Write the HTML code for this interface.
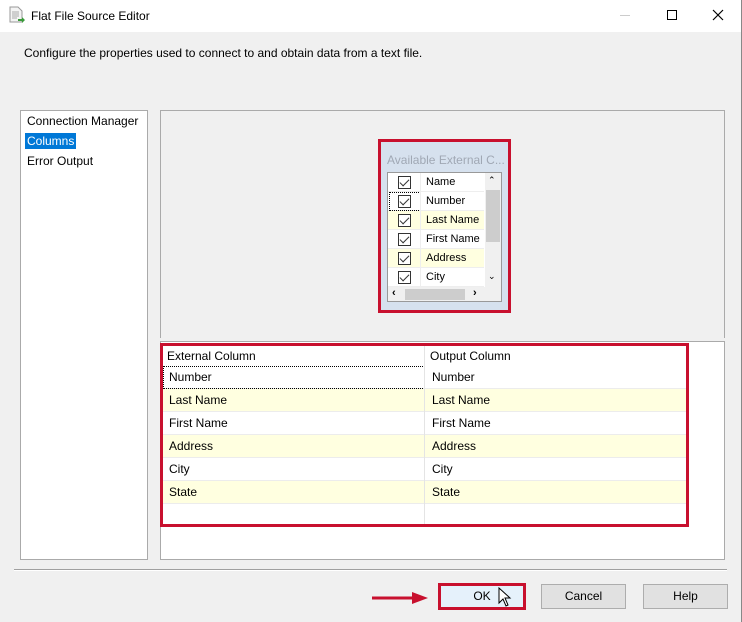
<!DOCTYPE html>
<html><head><style>
*{margin:0;padding:0;box-sizing:border-box}
body{width:742px;height:622px;background:#f0f0f0;font-family:"Liberation Sans",sans-serif;font-size:12px;color:#000;position:relative;overflow:hidden}
.a{position:absolute}
.row{position:absolute;left:0;width:523px;height:23px;border-bottom:1px solid #ececec}
.row span{position:absolute;top:4px}
.y{background:#ffffe0}
.btn{position:absolute;background:#e1e1e1;border:1px solid #adadad;text-align:center;line-height:23px;font-size:12px}
.cb{position:absolute;left:10px;width:13px;height:13px;border:1px solid #333;background:#fff}
.cb:after{content:"";position:absolute;left:3px;top:0px;width:4px;height:8px;border:solid #333;border-width:0 1px 1px 0;transform:rotate(45deg)}
.lr{position:absolute;left:0;width:96px;height:19px;border-bottom:1px solid #eee}
.lr span{position:absolute;left:38px;top:3px;font-size:11px}
</style></head><body>
<div class="a" style="left:0;top:0;width:742px;height:32px;background:#fff"></div>
<svg class="a" style="left:8px;top:6px" width="18" height="18"><path d="M2 1h8l4 4v11H2z" fill="#f4f4f4" stroke="#999"/><path d="M4 6h7M4 8h7M4 10h7M4 12h5" stroke="#aaa"/><path d="M10 13h4v-2l3 3-3 3v-2h-4z" fill="#3a9a3a"/></svg>
<div class="a" style="left:31px;top:9px;font-size:12px">Flat File Source Editor</div>
<div class="a" style="left:620px;top:15px;width:10px;height:1px;background:#ccc"></div>
<div class="a" style="left:667px;top:10px;width:10px;height:10px;border:1px solid #000"></div>
<svg class="a" style="left:712px;top:9px" width="12" height="12"><path d="M1 1L11 11M11 1L1 11" stroke="#000" stroke-width="1.2"/></svg>
<div class="a" style="left:741px;top:0;width:1px;height:622px;background:#888"></div>
<div class="a" style="left:24px;top:46px">Configure the properties used to connect to and obtain data from a text file.</div>

<div class="a" style="left:20px;top:110px;width:128px;height:450px;background:#fff;border:1px solid #aaa"></div>
<div class="a" style="left:27px;top:114px">Connection Manager</div>
<div class="a" style="left:25px;top:133px;background:#0078d7;color:#fff;padding:1px 2px">Columns</div>
<div class="a" style="left:27px;top:154px">Error Output</div>

<div class="a" style="left:160px;top:110px;width:565px;height:228px;border:1px solid #aaa;border-bottom:none;background:#f0f0f0"></div>
<div class="a" style="left:378px;top:139px;width:133px;height:174px;border:3px solid #c8102e;background:#d6e1ee"></div>
<div class="a" style="left:387px;top:153px;color:#a0a8b4;font-size:12px">Available External C...</div>
<div class="a" style="left:387px;top:172px;width:115px;height:130px;background:#fff;border:1px solid #999;overflow:hidden">
<div class="lr" style="top:0"><div class="cb" style="top:3px"></div><span>Name</span></div>
<div class="lr" style="top:19px"><div class="cb" style="top:3px"></div><span>Number</span><div class="a" style="left:1px;top:0;width:32px;height:19px;border:1px dotted #000"></div></div>
<div class="lr y" style="top:38px"><div class="cb" style="top:3px"></div><span>Last Name</span></div>
<div class="lr" style="top:57px"><div class="cb" style="top:3px"></div><span>First Name</span></div>
<div class="lr y" style="top:76px"><div class="cb" style="top:3px"></div><span>Address</span></div>
<div class="lr" style="top:95px"><div class="cb" style="top:3px"></div><span>City</span></div>
<div class="a" style="left:32px;top:0;width:1px;height:114px;background:#eee"></div>
<div class="a" style="left:97px;top:0;width:16px;height:114px;background:#f0f0f0"></div>
<div class="a" style="left:98px;top:17px;width:14px;height:52px;background:#cdcdcd"></div>
<div class="a" style="left:100px;top:2px;font-size:9px">&#8963;</div>
<div class="a" style="left:100px;top:98px;font-size:9px">&#8964;</div>
<div class="a" style="left:0;top:114px;width:113px;height:15px;background:#f0f0f0"></div>
<div class="a" style="left:17px;top:116px;width:60px;height:11px;background:#cdcdcd"></div>
<div class="a" style="left:4px;top:114px;font-size:11px;font-weight:bold">&#8249;</div>
<div class="a" style="left:85px;top:114px;font-size:11px;font-weight:bold">&#8250;</div>
</div>

<div class="a" style="left:160px;top:341px;width:565px;height:219px;background:#fff;border:1px solid #aaa"></div>
<div class="a" style="left:160px;top:343px;width:529px;height:184px;border:3px solid #c8102e;background:#fff;overflow:hidden">
<div class="a" style="left:4px;top:3px">External Column</div>
<div class="a" style="left:267px;top:3px">Output Column</div>
<div class="row" style="top:20px"><span style="left:6px">Number</span><span style="left:269px">Number</span></div>
<div class="a" style="left:0;top:20px;width:262px;height:23px;border:1px dotted #000"></div>
<div class="row y" style="top:43px"><span style="left:6px">Last Name</span><span style="left:269px">Last Name</span></div>
<div class="row" style="top:66px"><span style="left:6px">First Name</span><span style="left:269px">First Name</span></div>
<div class="row y" style="top:89px"><span style="left:6px">Address</span><span style="left:269px">Address</span></div>
<div class="row" style="top:112px"><span style="left:6px">City</span><span style="left:269px">City</span></div>
<div class="row y" style="top:135px"><span style="left:6px">State</span><span style="left:269px">State</span></div>
<div class="a" style="left:261px;top:0;width:1px;height:180px;background:#e4e4e4"></div>
</div>

<div class="a" style="left:14px;top:569px;width:713px;height:2px;border-top:1px solid #a0a0a0;border-bottom:1px solid #fff"></div>
<svg class="a" style="left:370px;top:590px" width="62" height="16"><path d="M2 8H44" stroke="#c8102e" stroke-width="3"/><path d="M42 2L58 8L42 14z" fill="#c8102e"/></svg>
<div class="btn" style="left:438px;top:583px;width:88px;height:27px;background:#e5f1fb;border:3px solid #c8102e;line-height:21px">OK</div>
<svg class="a" style="left:498px;top:587px" width="14" height="22"><path d="M1 1V16L5 12L8 19L10 18L7 11H12Z" fill="#fff" stroke="#000"/></svg>
<div class="btn" style="left:541px;top:584px;width:85px;height:25px">Cancel</div>
<div class="btn" style="left:643px;top:584px;width:85px;height:25px">Help</div>
</body></html>
